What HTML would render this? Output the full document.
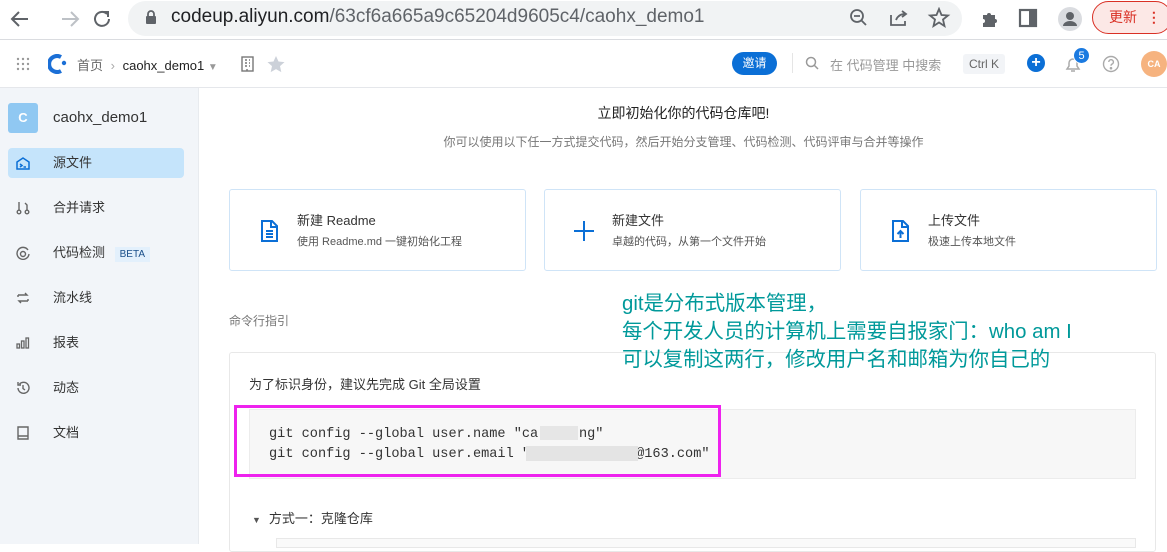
<!DOCTYPE html>
<html><head><meta charset="utf-8"><style>
*{box-sizing:border-box;margin:0;padding:0}
body{width:1167px;height:544px;overflow:hidden;background:#fff;font-family:"Liberation Sans","Noto Sans CJK SC",sans-serif;position:relative;color:#333}
.a{position:absolute}
.chrome{left:0;top:0;width:1167px;height:40px;background:#fff;border-bottom:1px solid #dadce0}
.pill{left:128px;top:1px;width:834px;height:35px;background:#f1f3f4;border-radius:18px}
.url{left:171px;top:6px;font-size:19px;color:#202124;white-space:nowrap}
.url span{color:#5f6368}
.hdr{left:0;top:41px;width:1167px;height:47px;border-bottom:1px solid #e5e7eb;background:#fff}
.side{left:0;top:88px;width:199px;height:456px;background:#f2f5f9;border-right:1px solid #e8ebef}
.nav{left:8px;width:176px;height:30px;border-radius:4px;font-size:13px;color:#333;line-height:30px;padding-left:45px}
.ic{position:absolute;left:8px;top:8px}
.card{width:297px;height:82px;border:1px solid #cfe4f7;border-radius:3px;background:#fff}
.card .t{position:absolute;left:67px;top:20px;font-size:13px;color:#333}
.card .s{position:absolute;left:67px;top:43px;font-size:11px;color:#555}
.note{left:622px;font-size:20.4px;color:#00999a;white-space:nowrap}
.mono{font-family:"Liberation Mono",monospace;font-size:13.6px;color:#333;white-space:pre}
</style></head><body>
<div class="a chrome"></div>
<svg class="a" style="left:10px;top:8px" width="120" height="22" fill="none" stroke-width="2">
<path d="M18 11H3M9 4 2 11l7 7" stroke="#5f6368"/>
<path d="M52 11h15M61 4l7 7-7 7" stroke="#bdc1c6"/>
<path d="M97 6a7 7 0 1 0 2 5" stroke="#5f6368"/><path d="M93 4h5v5" stroke="#5f6368"/>
</svg>
<div class="a pill"></div>
<svg class="a" style="left:145px;top:10px" width="12" height="15"><rect x="1" y="6" width="10" height="8" rx="1" fill="#5f6368"/><path d="M3 7V4a3 3 0 0 1 6 0v3" stroke="#5f6368" stroke-width="1.8" fill="none"/></svg>
<div class="a url">codeup.aliyun.com<span>/63cf6a665a9c65204d9605c4/caohx_demo1</span></div>
<svg class="a" style="left:848px;top:7px" width="110" height="22" fill="none" stroke="#5f6368" stroke-width="1.8">
<circle cx="9" cy="9" r="6"/><path d="M13.5 13.5 18 18M6 9h6"/>
<path d="M43 8v10h14v-4M48 13c2-5 6-6 9-6M54 4l4 3-4 3"/>
<path d="M91 2l2.5 6 6.5.5-5 4 1.5 6.5-5.5-3.5-5.5 3.5 1.5-6.5-5-4 6.5-.5z"/>
</svg>
<svg class="a" style="left:980px;top:7px" width="110" height="24">
<path d="M3 8h4a2 2 0 0 1 4 0h4v4a2 2 0 0 1 0 4v4H3v-4a2 2 0 0 0 0-4z" fill="#5f6368"/>
<rect x="40" y="3" width="16" height="16" fill="none" stroke="#5f6368" stroke-width="2.2"/><rect x="49" y="3" width="7" height="16" fill="#5f6368"/>
<circle cx="90" cy="12" r="12" fill="#dadce0"/><circle cx="90" cy="9" r="4" fill="#5f6368"/><path d="M83 19a7 5 0 0 1 14 0z" fill="#5f6368"/>
</svg>
<div class="a" style="left:1092px;top:1px;width:80px;height:33px;border:1.5px solid #d93025;border-radius:17px;background:#fce8e6;color:#d93025;font-size:14px;line-height:30px;padding-left:16px">更新 <span style="margin-left:6px;font-weight:bold">⋮</span></div>

<div class="a hdr"></div>
<svg class="a" style="left:16px;top:57px" width="14" height="14" fill="#999"><circle cx="2" cy="2" r="1.2"/><circle cx="7" cy="2" r="1.2"/><circle cx="12" cy="2" r="1.2"/><circle cx="2" cy="7" r="1.2"/><circle cx="7" cy="7" r="1.2"/><circle cx="12" cy="7" r="1.2"/><circle cx="2" cy="12" r="1.2"/><circle cx="7" cy="12" r="1.2"/><circle cx="12" cy="12" r="1.2"/></svg>
<svg class="a" style="left:48px;top:54px" width="22" height="20"><path d="M13 3a8 8 0 1 0 0 14" stroke="#1b6fd6" stroke-width="4" fill="none"/><circle cx="16" cy="9" r="2.2" fill="#1b6fd6"/></svg>
<div class="a" style="left:77px;top:55px;font-size:13px;color:#666">首页 <span style="color:#aaa;margin:0 4px">›</span> <span style="color:#222">caohx_demo1</span> <span style="color:#999;font-size:10px">▼</span></div>
<svg class="a" style="left:240px;top:55px" width="48" height="18" fill="none" stroke="#777" stroke-width="1.4"><rect x="2" y="2" width="11" height="14"/><path d="M5 5h2M9 5h1M5 8h2M9 8h1M5 11h2M9 11h1M7 14v2"/><path d="M36 1l2.5 5.5 6 .6-4.5 4 1.3 6-5.3-3-5.3 3 1.3-6-4.5-4 6-.6z" fill="#ccd1d9" stroke="none"/></svg>
<div class="a" style="left:732px;top:52px;width:45px;height:23px;background:#0b6fd6;border-radius:12px;color:#fff;font-size:12px;line-height:23px;text-align:center">邀请</div>
<div class="a" style="left:792px;top:53px;width:1px;height:20px;background:#e5e5e5"></div>
<svg class="a" style="left:805px;top:56px" width="14" height="14" fill="none" stroke="#999" stroke-width="1.5"><circle cx="6" cy="6" r="4.5"/><path d="M9.5 9.5 13 13"/></svg>
<div class="a" style="left:830px;top:55px;font-size:13px;color:#999">在 代码管理 中搜索</div>
<div class="a" style="left:963px;top:54px;width:42px;height:20px;background:#f2f4f7;border-radius:3px;font-size:12px;color:#666;line-height:20px;text-align:center">Ctrl K</div>
<div class="a" style="left:1027px;top:54px;width:18px;height:18px;border-radius:50%;background:#0b6fd6;color:#fff;font-size:16px;line-height:17px;text-align:center;font-weight:bold">+</div>
<svg class="a" style="left:1064px;top:55px" width="18" height="18" fill="none" stroke="#aaa" stroke-width="1.5"><path d="M3 14h12l-2-3V8a4 4 0 0 0-8 0v3zM7 16h4"/></svg>
<div class="a" style="left:1073px;top:47px;width:17px;height:17px;border-radius:50%;background:#1b7ae0;color:#fff;font-size:11px;line-height:17px;text-align:center;border:1px solid #fff">5</div>
<svg class="a" style="left:1102px;top:55px" width="18" height="18" fill="none" stroke="#aaa" stroke-width="1.4"><circle cx="9" cy="9" r="7.5"/><path d="M6.8 7a2.3 2.3 0 1 1 3 2.2c-.7.3-.8.8-.8 1.6"/><circle cx="9" cy="13.2" r=".6" fill="#aaa"/></svg>
<div class="a" style="left:1141px;top:51px;width:26px;height:26px;border-radius:50%;background:#f6b37f;color:#fff;font-size:9px;font-weight:bold;line-height:26px;text-align:center">CA</div>

<div class="a side"></div>
<div class="a" style="left:8px;top:103px;width:30px;height:30px;border-radius:3px;background:#90c8f2;color:#fff;font-weight:bold;font-size:13px;line-height:30px;text-align:center">C</div>
<div class="a" style="left:53px;top:109px;font-size:15px;color:#333">caohx_demo1</div>
<div class="a nav" style="top:148px;background:#c5e4fb">源文件<svg class="ic" width="14" height="14" fill="none" stroke="#0b6fd6" stroke-width="1.5"><path d="M1 6l6-4 6 4v7H1z"/><path d="M4 8l2 1.5L4 11M7.5 11H10"/></svg></div>
<div class="a nav" style="top:193px">合并请求<svg class="ic" width="14" height="14" fill="none" stroke="#666" stroke-width="1.4"><circle cx="3" cy="11" r="1.8"/><circle cx="11" cy="11" r="1.8"/><path d="M3 9V1M11 9V4L9 2"/></svg></div>
<div class="a nav" style="top:238px">代码检测 <span style="background:#e3f0fc;color:#1a4f8a;font-size:10px;padding:2px 5px;margin-left:6px">BETA</span><svg class="ic" width="14" height="14" fill="none" stroke="#666" stroke-width="1.4"><path d="M12 4a6 6 0 1 0 1 4"/><circle cx="7" cy="8" r="2.5"/></svg></div>
<div class="a nav" style="top:283px">流水线<svg class="ic" width="14" height="14" fill="none" stroke="#666" stroke-width="1.4"><path d="M2 4h9l-2-2M12 10H3l2 2M2 4v2M12 10V8"/></svg></div>
<div class="a nav" style="top:328px">报表<svg class="ic" width="14" height="14" fill="none" stroke="#666" stroke-width="1.3"><rect x="1" y="8" width="2.5" height="4"/><rect x="5.5" y="5" width="2.5" height="7"/><rect x="10" y="2" width="2.5" height="10"/></svg></div>
<div class="a nav" style="top:373px">动态<svg class="ic" width="14" height="14" fill="none" stroke="#666" stroke-width="1.4"><path d="M2 7a5.5 5.5 0 1 0 1.5-4M2 1v3h3M7 4v3.5l2 1.5"/></svg></div>
<div class="a nav" style="top:418px">文档<svg class="ic" width="14" height="14" fill="none" stroke="#666" stroke-width="1.4"><path d="M2 1h10v12H2zM2 10h10"/></svg></div>

<div class="a" style="left:200px;top:103px;width:967px;text-align:center;font-size:14px;color:#222">立即初始化你的代码仓库吧!</div>
<div class="a" style="left:200px;top:133px;width:967px;text-align:center;font-size:12px;color:#777">你可以使用以下任一方式提交代码，然后开始分支管理、代码检测、代码评审与合并等操作</div>

<div class="a card" style="left:229px;top:189px"><svg class="a" style="left:30px;top:29px" width="20" height="24" fill="none" stroke="#0b6fd6" stroke-width="2"><path d="M2 2h10l5 5v15H2z"/><path d="M11 2v6h6M6 12h7M6 15h7M6 18h7"/></svg><div class="t">新建 Readme</div><div class="s">使用 Readme.md 一键初始化工程</div></div>
<div class="a card" style="left:544px;top:189px"><svg class="a" style="left:28px;top:30px" width="22" height="22" stroke="#0b6fd6" stroke-width="2"><path d="M11 1v20M1 11h20"/></svg><div class="t">新建文件</div><div class="s">卓越的代码，从第一个文件开始</div></div>
<div class="a card" style="left:860px;top:189px"><svg class="a" style="left:30px;top:29px" width="20" height="24" fill="none" stroke="#0b6fd6" stroke-width="2"><path d="M2 2h10l5 5v15H2z"/><path d="M11 2v6h6M9.5 19v-7M6.5 15l3-3 3 3"/></svg><div class="t">上传文件</div><div class="s">极速上传本地文件</div></div>

<div class="a" style="left:229px;top:312px;font-size:12px;color:#777">命令行指引</div>
<div class="a" style="left:229px;top:352px;width:927px;height:200px;border:1px solid #e8e8e8;border-radius:3px"></div>
<div class="a" style="left:249px;top:374px;font-size:13px;color:#333">为了标识身份，建议先完成 Git 全局设置</div>
<div class="a" style="left:249px;top:409px;width:887px;height:70px;background:#f7f7f7;border:1px solid #ececec"></div>
<div class="a mono" style="left:269px;top:425px;line-height:20px">git config --global user.name "ca     ng"
git config --global user.email "             @163.com"</div>
<div class="a" style="left:540px;top:426px;width:38px;height:14px;background:#e6e6e6"></div>
<div class="a" style="left:526px;top:446px;width:112px;height:15px;background:#e4e4e4"></div>
<div class="a" style="left:234px;top:405px;width:487px;height:72px;border:3px solid #ee22ee"></div>
<div class="a" style="left:252px;top:508px;font-size:13px;color:#333"><span style="font-size:9px;color:#555;margin-right:8px">▼</span>方式一：克隆仓库</div>
<div class="a" style="left:276px;top:538px;width:860px;height:10px;border:1px solid #e8e8e8;background:#fafafa"></div>

<div class="a note" style="top:286px">git是分布式版本管理，</div>
<div class="a note" style="top:314px">每个开发人员的计算机上需要自报家门：who am I</div>
<div class="a note" style="top:342px">可以复制这两行，修改用户名和邮箱为你自己的</div>
</body></html>
